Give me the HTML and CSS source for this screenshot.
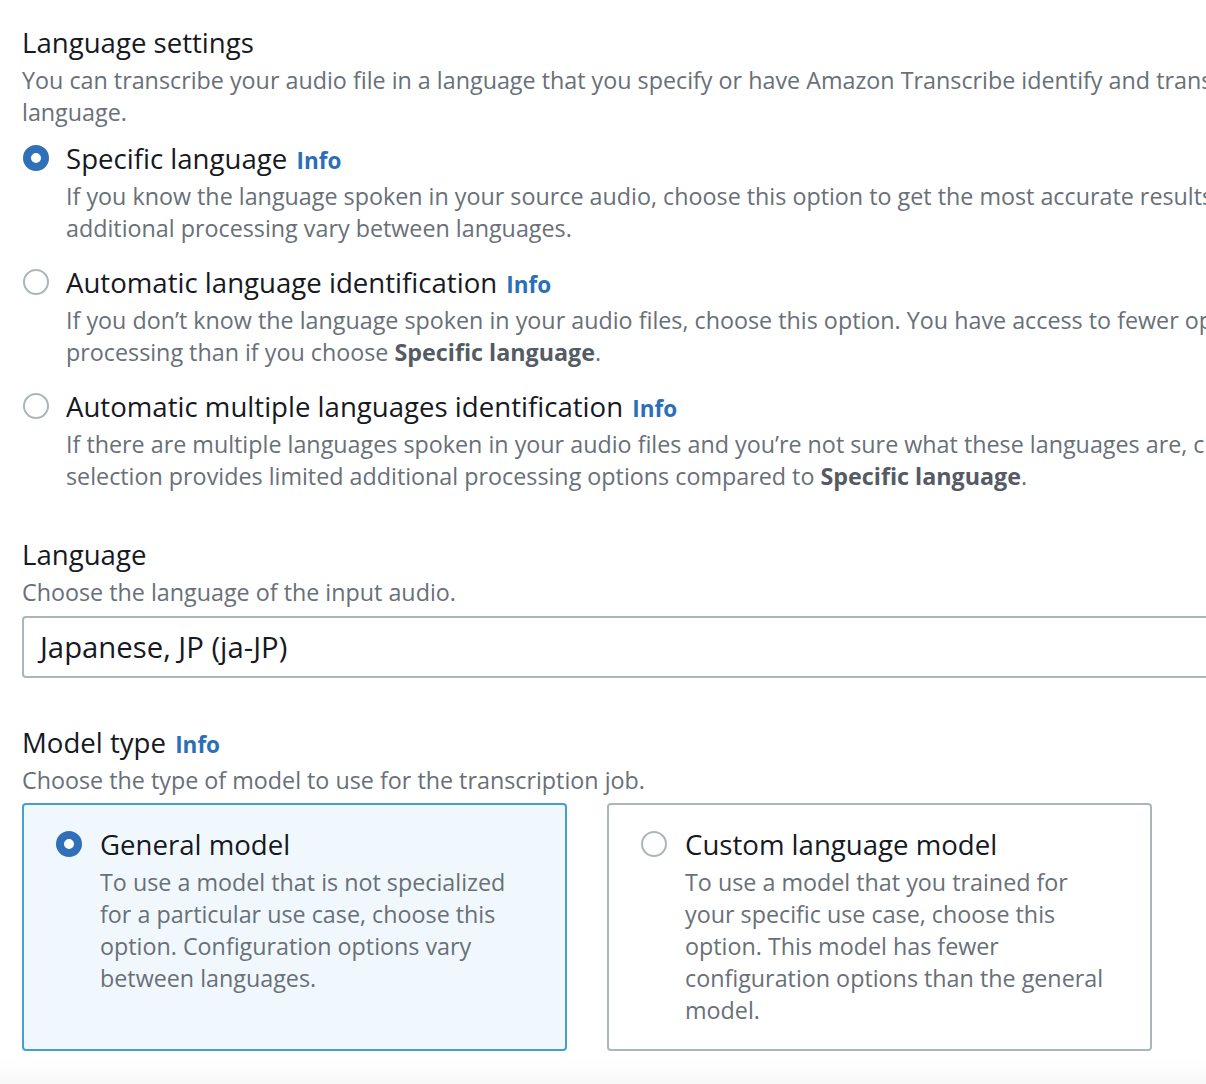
FILE: index.html
```html
<!DOCTYPE html>
<html lang="en">
<head>
<meta charset="utf-8">
<title>Language settings</title>
<link rel="stylesheet" href="styles.css">
</head>
<body>
<main class="page">
  <section class="section">
    <h2 class="title">Language settings</h2>
    <p class="desc lead">You can transcribe your audio file in a language that you specify or have Amazon Transcribe identify and transcribe the dominant<br>language.</p>

    <div class="options">
      <div class="option">
        <span class="radio checked"></span>
        <div class="option-body">
          <div class="option-label">Specific language <a class="info">Info</a></div>
          <p class="desc">If you know the language spoken in your source audio, choose this option to get the most accurate results. Configuration options for<br>additional processing vary between languages.</p>
        </div>
      </div>
      <div class="option">
        <span class="radio"></span>
        <div class="option-body">
          <div class="option-label">Automatic language identification <a class="info">Info</a></div>
          <p class="desc">If you don’t know the language spoken in your audio files, choose this option. You have access to fewer options for additional<br>processing than if you choose <b>Specific language</b>.</p>
        </div>
      </div>
      <div class="option">
        <span class="radio"></span>
        <div class="option-body">
          <div class="option-label">Automatic multiple languages identification <a class="info">Info</a></div>
          <p class="desc">If there are multiple languages spoken in your audio files and you’re not sure what these languages are, choose this option. This<br>selection provides limited additional processing options compared to <b>Specific language</b>.</p>
        </div>
      </div>
    </div>
  </section>

  <section class="field">
    <h3 class="title">Language</h3>
    <p class="desc lead">Choose the language of the input audio.</p>
    <div class="select">Japanese, JP (ja-JP)</div>
  </section>

  <section class="field model">
    <h3 class="title">Model type <a class="info">Info</a></h3>
    <p class="desc lead">Choose the type of model to use for the transcription job.</p>
    <div class="cards">
      <div class="card selected">
        <span class="radio checked"></span>
        <div class="option-body">
          <div class="option-label">General model</div>
          <p class="desc">To use a model that is not specialized<br>for a particular use case, choose this<br>option. Configuration options vary<br>between languages.</p>
        </div>
      </div>
      <div class="card">
        <span class="radio"></span>
        <div class="option-body">
          <div class="option-label">Custom language model</div>
          <p class="desc">To use a model that you trained for<br>your specific use case, choose this<br>option. This model has fewer<br>configuration options than the general<br>model.</p>
        </div>
      </div>
    </div>
  </section>
  <div class="footer-fade"></div>
</main>
</body>
</html>
```

FILE: styles.css
```css
html, body {
  margin: 0;
  padding: 0;
  background: #ffffff;
  overflow: hidden;
}
body {
  width: 1206px;
  height: 1084px;
  font-family: "Open Sans", "Noto Sans", "Liberation Sans", sans-serif;
  color: #16191f;
}
.page {
  padding: 24px 0 0 22px;
  width: 1500px;
  box-sizing: border-box;
}
.title {
  margin: 0;
  font-size: 27.6px;
  line-height: 36px;
  height: 36px;
  font-weight: 400;
  color: #16191f;
  white-space: nowrap;
}
.desc {
  margin: 0;
  font-size: 23.3px;
  line-height: 32px;
  color: #687078;
  white-space: nowrap;
}
.desc.lead {
  margin-top: 4px;
}
.desc b {
  color: #545b64;
  font-weight: 700;
}
.info {
  font-size: 22.5px;
  line-height: 1;
  font-weight: 700;
  color: #2a6fb8;
  margin-left: 2px;
  text-decoration: none;
}
.options {
  margin-top: 8px;
  display: flex;
  flex-direction: column;
  gap: 16px;
}
.option {
  display: flex;
  align-items: flex-start;
  gap: 17px;
  padding-left: 1px;
}
.radio {
  flex: none;
  width: 26px;
  height: 26px;
  box-sizing: border-box;
  border-radius: 50%;
  border: 2px solid #aab7b8;
  background: #fff;
  margin-top: 9px;
}
.radio.checked {
  border: 8px solid #2f70b8;
}
.option-label {
  font-size: 27.6px;
  line-height: 44px;
  height: 44px;
  color: #16191f;
  white-space: nowrap;
}
.field {
  margin-top: 44px;
}
.select {
  margin-top: 8px;
  height: 62px;
  box-sizing: border-box;
  border: 2px solid #aab7b8;
  border-radius: 4px;
  padding: 0 16px;
  display: flex;
  align-items: center;
  font-size: 29.3px;
  color: #16191f;
  width: 1300px;
}
.model {
  margin-top: 46px;
}
.cards {
  margin-top: 7px;
  display: grid;
  grid-template-columns: 545px 545px;
  gap: 40px;
}
.card {
  display: flex;
  align-items: flex-start;
  gap: 18px;
  border: 2px solid #aab7b8;
  border-radius: 4px;
  padding: 17px 24px 23px 32px;
  height: 248px;
  box-sizing: border-box;
  background: #fff;
}
.card.selected {
  border-color: #44a0cf;
  background: #f1f8fd;
}
.footer-fade {
  margin-left: -22px;
  margin-top: 8px;
  height: 40px;
  background: linear-gradient(#ffffff, #f3f3f3);
}
```
